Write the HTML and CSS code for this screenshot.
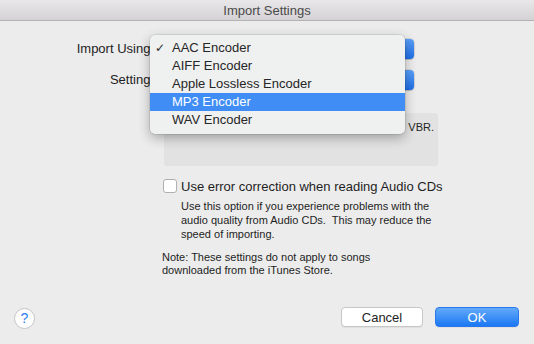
FILE: index.html
```html
<!DOCTYPE html>
<html lang="en">
<head>
  <meta charset="UTF-8" />
  <title>Import Settings</title>
  <link rel="stylesheet" href="styles.css">
</head>
<body>
  <div class="window">
    <div class="titlebar">Import Settings</div>

    <div class="content">
      <div class="field-row first">
        <label class="field-label">Import Using:</label>
        <div class="popup"><span class="popup-value">MP3 Encoder</span><span class="stepper"></span></div>
      </div>
      <div class="field-row">
        <label class="field-label">Setting:</label>
        <div class="popup"><span class="popup-value">High Quality (160 kbps)</span><span class="stepper"></span></div>
      </div>

      <div class="details">Details: 160 kbps (stereo), using <span class="vbr">VBR.</span></div>

      <div class="check-row">
        <span class="checkbox"></span>
        <span class="check-label">Use error correction when reading Audio CDs</span>
      </div>
      <p class="hint">Use this option if you experience problems with the audio quality from Audio CDs.&nbsp; This may reduce the speed of importing.</p>

      <p class="note">Note: These settings do not apply to songs<br>downloaded from the iTunes Store.</p>

      <div class="footer">
        <button class="help-btn">?</button>
        <div class="spacer"></div>
        <button class="btn">Cancel</button>
        <button class="btn btn-primary">OK</button>
      </div>
    </div>

    <!-- open popup menu -->
    <div class="menu">
      <div class="menu-item checked">AAC Encoder</div>
      <div class="menu-item">AIFF Encoder</div>
      <div class="menu-item">Apple Lossless Encoder</div>
      <div class="menu-item active">MP3 Encoder</div>
      <div class="menu-item">WAV Encoder</div>
    </div>
  </div>
</body>
</html>
```

FILE: styles.css
```css
body {
  margin: 0;
  padding: 0;
  font-family: 'Liberation Sans', Arial, sans-serif;
  background: #ececec;
}

.window {
  position: relative;
  width: 534px;
  height: 344px;
  overflow: hidden;
  background: #ececec;
  color: #1e1e1e;
}

.titlebar {
  height: 20px;
  line-height: 21px;
  text-align: center;
  font-size: 13px;
  color: #4a4a4a;
  background: linear-gradient(#e9e7e9, #d4d2d4);
  border-bottom: 1px solid #b3b3b3;
}

.content {
  display: flex;
  flex-direction: column;
  height: 323px;
}

.field-row {
  display: flex;
  align-items: center;
  gap: 4px;
  margin-top: 11px;
}

.field-row.first { margin-top: 18px; }

.field-label {
  width: 154px;
  text-align: right;
  font-size: 13px;
  line-height: 20px;
}

.popup {
  position: relative;
  width: 256px;
  height: 20px;
  background: white;
  border-radius: 4px;
  box-shadow: 0 0 0 0.5px rgba(0,0,0,0.2), 0 1px 1px rgba(0,0,0,0.15);
  font-size: 13px;
  line-height: 20px;
}

.popup-value { padding-left: 9px; }

.stepper {
  position: absolute;
  right: 0;
  top: 0;
  width: 17px;
  height: 20px;
  border-radius: 0 4px 4px 0;
  background: linear-gradient(#5a9ff8, #1f6fe8);
}

.details {
  margin: 23px 0 0 164px;
  width: 274px;
  height: 53px;
  box-sizing: border-box;
  padding: 8px 4px 0 6px;
  background: #e2e2e2;
  border-radius: 3px;
  font-size: 11px;
  white-space: nowrap;
  text-align: right;
  color: #222;
}

.vbr { margin-left: 6px; }

.check-row {
  display: flex;
  align-items: center;
  gap: 4px;
  margin: 13px 0 0 163px;
  height: 14px;
}

.checkbox {
  width: 14px;
  height: 14px;
  background: white;
  border: 1px solid #b0b0b0;
  border-radius: 3px;
  box-sizing: border-box;
}

.check-label {
  font-size: 13px;
  line-height: 14px;
  margin-top: 1px;
}

.hint {
  margin: 6px 0 0 181px;
  width: 275px;
  font-size: 11px;
  line-height: 14px;
}

.note {
  margin: 10px 0 0 162px;
  font-size: 11px;
  line-height: 13px;
}

.footer {
  margin-top: auto;
  display: flex;
  align-items: center;
  padding: 0 15px 15px 14px;
}

.spacer { flex: 1; }

.help-btn {
  width: 21px;
  height: 21px;
  padding: 0;
  margin-top: 3px;
  border-radius: 50%;
  border: 1px solid #c4c4c4;
  background: white;
  color: #2f7cf0;
  font-family: 'Liberation Sans', Arial, sans-serif;
  font-size: 14px;
  line-height: 19px;
}

.btn {
  width: 82px;
  height: 20px;
  padding: 0;
  margin-left: 12px;
  border: 1px solid #c6c6c6;
  border-radius: 4px;
  background: white;
  font-family: 'Liberation Sans', Arial, sans-serif;
  font-size: 13px;
  color: #1e1e1e;
  box-shadow: 0 1px 0 rgba(0,0,0,0.05);
}

.btn-primary {
  width: 84px;
  border-color: #2a78ee;
  background: linear-gradient(#63aaf9, #1b78f3);
  color: white;
}

.menu {
  position: absolute;
  left: 150px;
  top: 35px;
  width: 255px;
  padding: 4px 0 5px;
  background: #eff0f0;
  border-radius: 5px;
  box-shadow: 0 0 0 0.5px rgba(0,0,0,0.15), 0 4px 12px rgba(0,0,0,0.3);
}

.menu-item {
  position: relative;
  height: 18px;
  line-height: 18px;
  padding-left: 22px;
  font-size: 13px;
  color: #262626;
}

.menu-item.checked::before {
  content: "✓";
  position: absolute;
  left: 5px;
  font-family: 'DejaVu Sans', sans-serif;
  font-size: 12px;
  font-weight: bold;
}

.menu-item.active {
  background: #408ef5;
  color: white;
}
```
